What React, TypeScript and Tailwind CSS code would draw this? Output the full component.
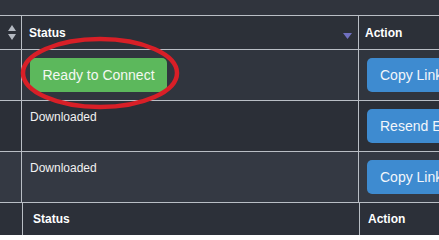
import React from 'react';

type Row = {
  status: 'ready' | 'downloaded';
  action: string;
  bg: string;
};

const rows: Row[] = [
  { status: 'ready', action: 'Copy Link', bg: 'bg-[#30353e]' },
  { status: 'downloaded', action: 'Resend Email', bg: 'bg-[#2b2f37]' },
  { status: 'downloaded', action: 'Copy Link', bg: 'bg-[#343943]' },
];

function SortBoth() {
  return (
    <svg width="8" height="15" viewBox="0 0 8 15" className="block">
      <path d="M4 0 L8 6 L0 6 Z" fill="#b4b9c1" />
      <path d="M0 9 L8 9 L4 15 Z" fill="#b4b9c1" />
    </svg>
  );
}

function SortDesc() {
  return (
    <svg width="9" height="6" viewBox="0 0 9 6" className="block">
      <path d="M0 0 L9 0 L4.5 6 Z" fill="#7070c0" />
    </svg>
  );
}

export default function App() {
  return (
    <div
      className="relative w-[439px] h-[235px] overflow-hidden bg-[#30343d] text-white"
      style={{ fontFamily: '"Liberation Sans", Arial, sans-serif' }}
    >
      <div className="h-[15px]" />

      {/* header */}
      <div className="grid grid-cols-[22px_337px_1fr] h-[34px] border-t border-[#b9bec5] bg-[#2c3038]">
        <div className="flex items-center justify-center border-r border-[#b9bec5] pl-[3px]">
          <SortBoth />
        </div>
        <div className="flex items-center justify-between border-r border-[#b9bec5] pl-[7px] pr-[6px]">
          <span className="text-[12px] font-bold">Status</span>
          <span className="pt-[6px]"><SortDesc /></span>
        </div>
        <div className="flex items-center pl-[6px]">
          <span className="text-[12px] font-bold">Action</span>
        </div>
      </div>

      {/* rows */}
      {rows.map((r, i) => (
        <div
          key={i}
          className={`grid grid-cols-[22px_337px_1fr] h-[51px] border-t border-[#b9bec5] ${r.bg}`}
        >
          <div className="border-r border-[#b9bec5]" />
          <div className="border-r border-[#b9bec5] pl-[8px] pt-[8px]">
            {r.status === 'ready' ? (
              <div className="inline-flex items-center justify-center w-[137px] h-[34px] rounded-[5px] bg-[#5cb85c] text-[14px] text-[#f4f8f2]">
                Ready to Connect
              </div>
            ) : (
              <div className="pt-[1px] text-[12px] leading-[14px] text-[#f2f2f2]">Downloaded</div>
            )}
          </div>
          <div className="pl-[8px] pt-[8px] overflow-hidden">
            <div className="flex items-center w-[120px] h-[34px] rounded-[5px] bg-[#3e8bd0] pl-[13px] text-[14px] text-[#f2f6fb] whitespace-nowrap">
              {r.action}
            </div>
          </div>
        </div>
      ))}

      {/* footer */}
      <div className="grid grid-cols-[23px_337px_1fr] h-[33px] border-t border-[#b9bec5] bg-[#2c3039]">
        <div className="border-r border-[#b9bec5]" />
        <div className="flex items-center border-r border-[#b9bec5] pl-[10px]">
          <span className="text-[12px] font-bold">Status</span>
        </div>
        <div className="flex items-center pl-[8px]">
          <span className="text-[12px] font-bold">Action</span>
        </div>
      </div>

      {/* red annotation ellipse */}
      <svg
        className="absolute left-[20px] top-[36px] pointer-events-none"
        width="160"
        height="74"
        viewBox="0 0 160 74"
      >
        <ellipse cx="80" cy="37" rx="77" ry="34" fill="none" stroke="#d81f27" strokeWidth="4.5" />
      </svg>
    </div>
  );
}
